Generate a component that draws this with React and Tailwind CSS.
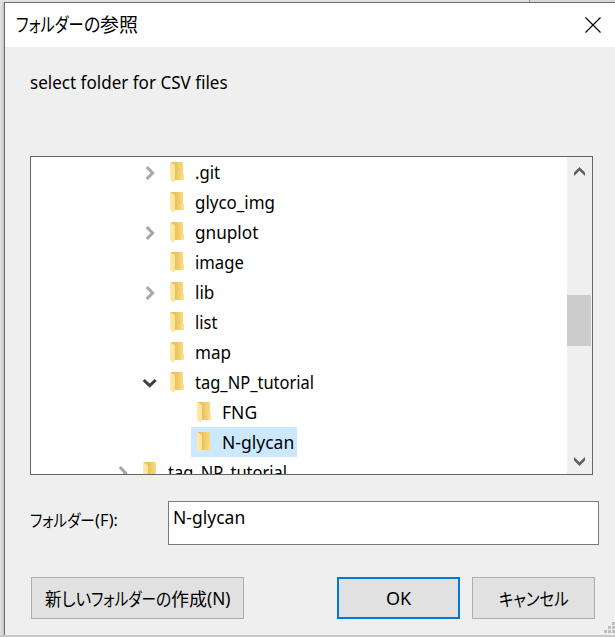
import { useLayoutEffect, useRef } from "react";

const FONT = "font-['Noto_Sans','Noto_Sans_CJK_JP',sans-serif]";

// Single-line text condensed or stretched to a fixed advance width.
function Fit({ w, children, className = "" }) {
  const ref = useRef(null);
  useLayoutEffect(() => {
    const el = ref.current;
    el.style.transform = `scaleX(${w / el.offsetWidth})`;
  }, [w]);
  return (
    <span className={`inline-block h-7 shrink-0 whitespace-nowrap leading-7 ${className}`} style={{ width: w }}>
      <span ref={ref} className="inline-block origin-left">
        {children}
      </span>
    </span>
  );
}

function Kana({ w, children }) {
  return (
    <Fit w={w} className="font-['Noto_Sans_CJK_JP',sans-serif] font-normal [font-feature-settings:'palt']">
      {children}
    </Fit>
  );
}

function Folder() {
  return (
    <svg className="mt-px h-[21px] w-[15px] shrink-0" viewBox="0 0 15 21">
      <defs>
        <linearGradient id="back" x1="0" x2="1">
          <stop offset="0.3" stopColor="#e8c15c" />
          <stop offset="1" stopColor="#fddd83" />
        </linearGradient>
        <linearGradient id="front" x1="0" x2="1">
          <stop offset="0" stopColor="#ffe9a8" />
          <stop offset="1" stopColor="#fbe397" />
        </linearGradient>
      </defs>
      <path d="M1 0H13V12L14 13V18H1Z" fill="url(#back)" />
      <path d="M12.5 12H13.2L14 13V18H11.5V13Z" fill="#ffe08a" />
      <path d="M0 0.3L5 3V17L4 20.8L0 18.3Z" fill="url(#front)" />
    </svg>
  );
}

function Chevron({ open }) {
  return open ? (
    <svg className="mt-[2px] h-4 w-4" viewBox="0 0 16 16" fill="none">
      <path d="M1.7 5L7.7 10.7L13.7 5" stroke="#404040" strokeWidth="3" />
    </svg>
  ) : (
    <svg className="mt-[2px] h-4 w-4" viewBox="0 0 16 16" fill="none">
      <path d="M4.8 2L10.6 8L4.8 14" stroke="#a6a6a6" strokeWidth="3" />
    </svg>
  );
}

const ROWS = [
  { name: ".git", w: 25, state: "closed" },
  { name: "glyco_img", w: 80 },
  { name: "gnuplot", w: 63, state: "closed" },
  { name: "image", w: 49 },
  { name: "lib", w: 19, state: "closed" },
  { name: "list", w: 22 },
  { name: "map", w: 36 },
  { name: "tag_NP_tutorial", w: 119, state: "open" },
  { name: "FNG", w: 35, depth: 2 },
  { name: "N-glycan", w: 72, depth: 2, selected: true },
  { name: "tag_NP_tutorial", w: 119, depth: 0, state: "closed" },
];
const INDENT = ["pl-[84px]", "pl-[111px]", "pl-[138px]"];

function Row({ name, w, state, depth = 1, selected }) {
  return (
    <li className={`flex h-[30px] shrink-0 items-center ${INDENT[depth]}`}>
      <span className="flex w-[22px] justify-start">{state && <Chevron open={state === "open"} />}</span>
      <span className={`flex h-[30px] items-center pl-[6px] pr-[3px] ${selected ? "bg-[#cce8ff]" : ""}`}>
        <Folder />
        <span className="ml-[10px] flex">
          <Fit w={w}>{name}</Fit>
        </span>
      </span>
    </li>
  );
}

function ScrollArrow({ d }) {
  return (
    <svg className="h-[11px] w-[13px]" viewBox="0 0 13 11" fill="#606060">
      <path d={d} />
    </svg>
  );
}

export default function App() {
  return (
    <div className={`flex h-[637px] w-[615px] flex-col overflow-hidden bg-[#dadada] text-[18px] text-black ${FONT}`}>
      <div className="flex h-[2px] shrink-0">
        <div className="w-[530px] border-r border-[#999] bg-[#e2e2e2]" />
        <div className="grow bg-[#d8d8d8]" />
      </div>
      <div className="flex h-[633px] shrink-0">
        <div className="w-1 shrink-0 bg-linear-to-r from-[#e6e6e6] to-[#c6c6c6]" />
        <main className="flex grow flex-col border-l border-t border-[#6b6b6b] bg-[#efefef]">
          <header className="flex h-[44px] shrink-0 items-center justify-between bg-white pl-[11px] pr-[14px]">
            <div className="-mt-[2px] flex text-[19px]">
              <Kana w={68}>フォルダー</Kana>
              <Kana w={16}>の</Kana>
              <Kana w={38}>参照</Kana>
            </div>
            <svg className="-mt-px h-4 w-4" viewBox="0 0 16 16" fill="none" stroke="#000" strokeWidth="1.2">
              <path d="M0.5 0.5L15.5 15.5M15.5 0.5L0.5 15.5" />
            </svg>
          </header>

          <div className="ml-[25px] mt-[21px] flex">
            <Fit w={198}>select folder for CSV files</Fit>
          </div>

          <section className="ml-[25px] mt-[60px] flex h-[319px] w-[563px] shrink-0 border border-[#646464] bg-white">
            <ul className="flex grow flex-col overflow-hidden">
              {ROWS.map((row, i) => (
                <Row key={i} {...row} />
              ))}
            </ul>
            <div className="flex w-[25px] shrink-0 flex-col items-center bg-[#efefef] pt-[10px]">
              <ScrollArrow d="M6.5 0L12 5.5V9L6.5 3.8L1 9V5.5Z" />
              <div className="mr-px mt-[117px] h-[51px] w-6 bg-[#cdcdcd]" />
              <div className="mt-[111px] flex">
                <ScrollArrow d="M6.5 9L12 3.5V0L6.5 5.2L1 0V3.5Z" />
              </div>
            </div>
          </section>

          <div className="ml-[25px] mt-[26px] flex shrink-0">
            <label className="flex w-[138px] pt-[5px] text-[17px]">
              <Kana w={65}>フォルダー</Kana>
              <Fit w={23}>(F):</Fit>
            </label>
            <div className="flex h-[44px] w-[431px] border border-[#7a7a7a] bg-white pl-1 pt-[1px]">
              <Fit w={72}>N-glycan</Fit>
            </div>
          </div>

          <div className="ml-[26px] mt-[32px] flex shrink-0">
            <button className="flex h-[42px] w-[213px] items-center justify-center border border-[#adadad] bg-[#e1e1e1] pb-px">
              <Kana w={46}>新しい</Kana>
              <Kana w={65}>フォルダー</Kana>
              <Kana w={15}>の</Kana>
              <Kana w={36}>作成</Kana>
              <Fit w={23}>(N)</Fit>
            </button>
            <button className="ml-[93px] flex h-[42px] w-[123px] items-center justify-center border-2 border-[#0078d7] bg-[#e1e1e1]">
              <Fit w={25}>OK</Fit>
            </button>
            <button className="ml-3 flex h-[42px] w-[123px] items-center justify-center border border-[#adadad] bg-[#e1e1e1] pb-px">
              <Kana w={70}>キャンセル</Kana>
            </button>
          </div>

          <svg className="ml-auto mt-[3px] h-[11px] w-[11px] shrink-0" viewBox="0 0 11 11" fill="#bfbfbf">
            <path d="M8 0h3v3h-3zM4 4h3v3h-3zM8 4h3v3h-3zM0 8h3v3h-3zM4 8h3v3h-3zM8 8h3v3h-3z" />
          </svg>
        </main>
      </div>
      <div className="h-[2px] shrink-0 bg-[#c8c8c8]" />
    </div>
  );
}
